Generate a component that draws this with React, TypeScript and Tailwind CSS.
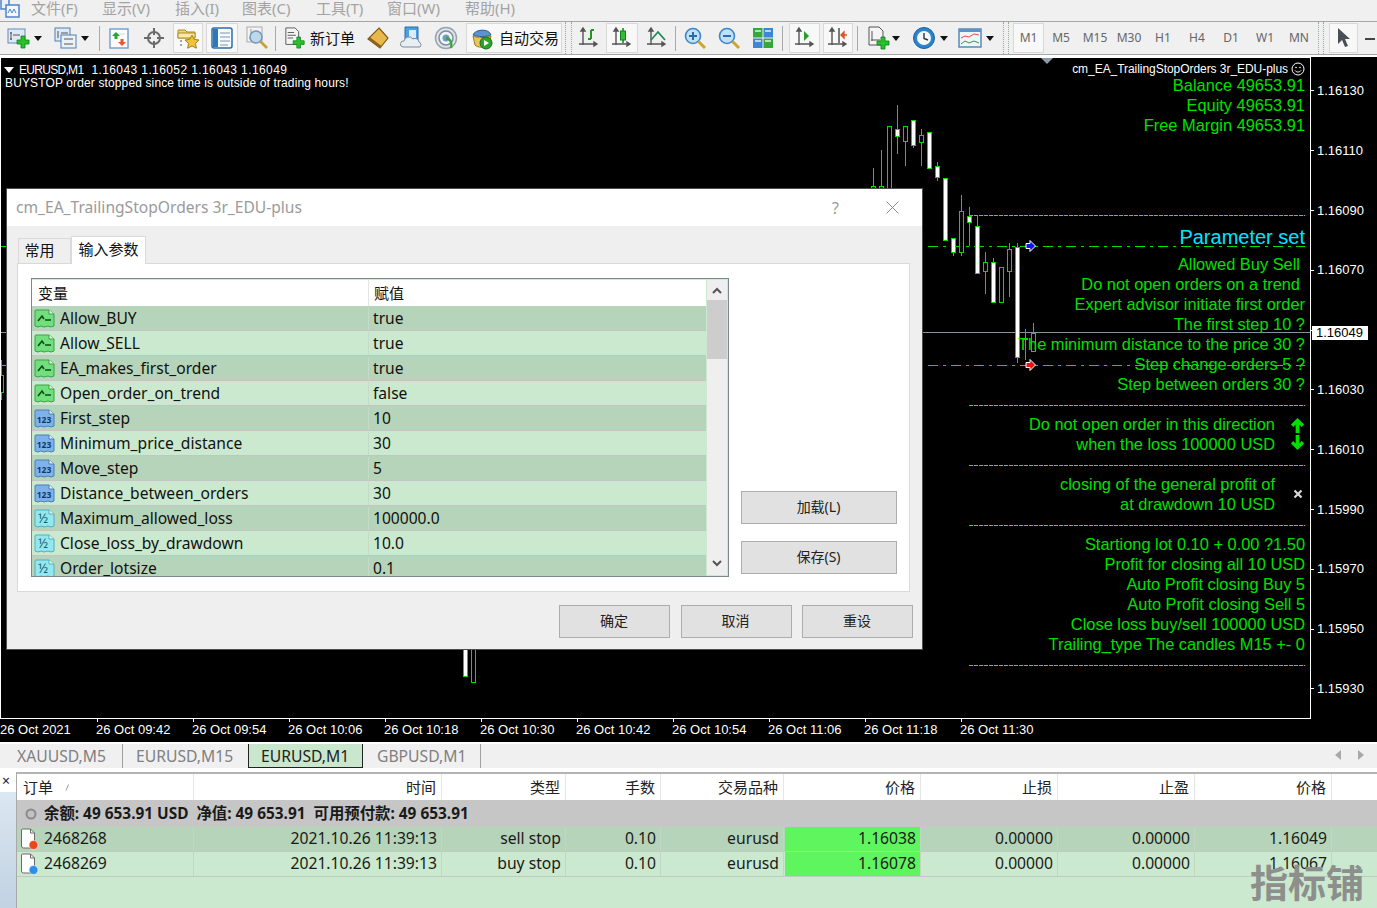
import React from "react";

const GREEN = "#00e000";
const CYAN = "#00d8e8";

// x, body top, body bottom, wick top, wick bottom, white body?
const CANDLES: [number, number, number, number, number, boolean][] = [
  [873, 186, 189, 168, 189, false],
  [881, 186, 189, 150, 189, false],
  [889, 126, 189, 126, 189, false],
  [897, 129, 136, 105, 154, true],
  [905, 126, 141, 126, 166, false],
  [913, 120, 145, 120, 148, true],
  [921, 135, 142, 129, 166, false],
  [929, 132, 168, 132, 168, true],
  [937, 166, 177, 162, 181, true],
  [945, 178, 240, 178, 240, true],
  [953, 238, 252, 238, 256, true],
  [961, 211, 252, 195, 256, false],
  [969, 216, 222, 207, 246, true],
  [977, 226, 273, 215, 273, true],
  [985, 262, 271, 252, 294, false],
  [993, 262, 302, 258, 302, true],
  [1001, 267, 302, 267, 302, false],
  [1009, 249, 271, 243, 297, false],
  [1017, 247, 357, 243, 363, true],
  [1025, 338, 339, 329, 360, false],
  [1033, 333, 351, 323, 351, false],
  [465, 640, 676, 640, 676, true],
  [473, 640, 682, 640, 682, false],
  [1, 375, 392, 360, 400, false],
];

const PRICES = ["1.16130", "1.16110", "1.16090", "1.16070", "", "1.16030", "1.16010", "1.15990", "1.15970", "1.15950", "1.15930"];
const TIMES = ["26 Oct 2021", "26 Oct 09:42", "26 Oct 09:54", "26 Oct 10:06", "26 Oct 10:18", "26 Oct 10:30", "26 Oct 10:42", "26 Oct 10:54", "26 Oct 11:06", "26 Oct 11:18", "26 Oct 11:30"];

const PARAMS: [string, string, "bool" | "int" | "dbl"][] = [
  ["Allow_BUY", "true", "bool"],
  ["Allow_SELL", "true", "bool"],
  ["EA_makes_first_order", "true", "bool"],
  ["Open_order_on_trend", "false", "bool"],
  ["First_step", "10", "int"],
  ["Minimum_price_distance", "30", "int"],
  ["Move_step", "5", "int"],
  ["Distance_between_orders", "30", "int"],
  ["Maximum_allowed_loss", "100000.0", "dbl"],
  ["Close_loss_by_drawdown", "10.0", "dbl"],
  ["Order_lotsize", "0.1", "dbl"],
];

const ORDERS = [
  ["2468268", "2021.10.26 11:39:13", "sell stop", "0.10", "eurusd", "1.16038", "0.00000", "0.00000", "1.16049"],
  ["2468269", "2021.10.26 11:39:13", "buy stop", "0.10", "eurusd", "1.16078", "0.00000", "0.00000", "1.16067"],
];

const COLS = "grid grid-cols-[177px_248px_124px_95px_123px_137px_137px_137px_137px_1fr]";

const Plus = ({ x = 0, y = 0 }: { x?: number; y?: number }) => (
  <path
    transform={`translate(${x} ${y})`}
    d="M4 0h4v4h4v4H8v4H4V8H0V4h4z"
    fill="#25c22b"
    stroke="#0f7d17"
    strokeWidth="0.8"
  />
);

const Caret = () => (
  <svg width="8" height="5" viewBox="0 0 8 5">
    <path d="M0 0h8L4 5z" fill="#111" />
  </svg>
);

const Sep = () => <div className="w-px h-[25px] bg-[#a9a9a9]" />;

const Grip = ({ className = "" }: { className?: string }) => (
  <div className={`h-[32px] border-x border-dotted border-[#9aa89a] ${className}`} />
);

const Slot = ({
  className = "",
  pressed,
  children,
}: {
  className?: string;
  pressed?: boolean;
  children?: React.ReactNode;
}) => (
  <div
    className={`flex h-[30px] shrink-0 items-center justify-center ${
      pressed ? "border border-[#d9d9d9] bg-[#f8f8f8]" : ""
    } ${className}`}
  >
    {children}
  </div>
);

const Axes = () => (
  <path d="M6 3v16M2 18h17M6 2l-2 3h4zM20 18l-3-2v4z" stroke="#555" strokeWidth="1.4" fill="#555" />
);

const Ico = ({ children, w = 24 }: { children: React.ReactNode; w?: number }) => (
  <svg width={w} height="24" viewBox="0 0 24 24">
    {children}
  </svg>
);

const Toolbar = () => (
  <div className="flex h-[34px] shrink-0 items-center border-y border-y-[#a6a6a6] bg-[#f0f0f0]">
    <div className="w-[6px] shrink-0" />
    <Slot className="w-[25px]">
      <Ico>
        <rect x="1" y="3" width="17" height="14" fill="#dfe9f4" stroke="#5f8cbc" />
        <path d="M4 6v8M3 7h2M3 13h2M6 9h7" stroke="#555" />
        <Plus x={10} y={10} />
      </Ico>
    </Slot>
    <Slot className="w-[14px]">
      <Caret />
    </Slot>
    <div className="w-[8px] shrink-0" />
    <Slot className="w-[25px]">
      <Ico>
        <rect x="1" y="2" width="15" height="13" fill="#dfe9f4" stroke="#4f80b4" />
        <rect x="7" y="9" width="15" height="13" fill="#eaf1f8" stroke="#4f80b4" />
        <path d="M4 5v7M7 7h7M10 13h9M10 18h9" stroke="#555" />
      </Ico>
    </Slot>
    <Slot className="w-[14px]">
      <Caret />
    </Slot>
    <div className="w-[7px] shrink-0" />
    <Sep />
    <Slot className="w-[38px]">
      <Ico>
        <rect x="3" y="3" width="18" height="19" fill="#fbfcfe" stroke="#79a3cc" strokeWidth="1.5" />
        <path d="M6 8h12" stroke="#cfdcea" />
        <path d="M9 6l4 4h-2.5v3h-3v-3H5z" fill="#28a828" />
        <path d="M15 20l-4-4h2.5v-3h3v3H19z" fill="#e8582c" />
      </Ico>
    </Slot>
    <Slot className="w-[32px]">
      <Ico>
        <circle cx="12" cy="12" r="6" fill="none" stroke="#6a6a6a" strokeWidth="2" />
        <path d="M12 2v7M12 15v7M2 12h7M15 12h7" stroke="#6a6a6a" strokeWidth="2" />
      </Ico>
    </Slot>
    <Slot pressed className="ml-[3px] w-[30px]">
      <Ico>
        <path d="M2 4h7l2 2h8v6H2z" fill="#f3d36e" stroke="#b08a2c" />
        <path d="M2 7h17v5H2z" fill="#fbe9a8" stroke="#b08a2c" />
        <path d="M5 14v8" stroke="#555" strokeDasharray="2 2" />
        <path d="M16 9l2.2 4.4 4.8.6-3.5 3.4.9 4.8-4.4-2.3-4.3 2.3.8-4.8L9 14l4.8-.6z" fill="#f0c43a" stroke="#a77f1c" />
      </Ico>
    </Slot>
    <Slot pressed className="ml-[3px] w-[32px]">
      <Ico>
        <rect x="2" y="2" width="20" height="20" rx="2" fill="#f6f9fd" stroke="#2d6ca8" strokeWidth="1.5" />
        <rect x="3" y="3" width="5" height="18" fill="#2f77b8" />
        <path d="M10 7h10M10 11h10M10 15h10M10 19h8" stroke="#7a98b8" />
      </Ico>
    </Slot>
    <Slot className="w-[37px]">
      <Ico>
        <rect x="2" y="1" width="15" height="15" fill="#f2f2f2" stroke="#aaa" />
        <path d="M6 3v10M4 12h11" stroke="#999" />
        <circle cx="11" cy="11" r="6" fill="#bcd7ee" stroke="#7797b5" strokeWidth="1.5" />
        <path d="M15.500 15.500L22 22" stroke="#c9a032" strokeWidth="2.6" />
      </Ico>
    </Slot>
    <Sep />
    <Slot className="ml-[8px] w-[22px]">
      <Ico>
        <path d="M2 1h10l4 4v14H2z" fill="#f4f4f4" stroke="#555" />
        <path d="M4 6h7M4 9h9M4 12h6" stroke="#555" />
        <Plus x={10} y={11} />
      </Ico>
    </Slot>
    <div className="ml-[4px] w-[46px] shrink-0 text-[15px] leading-[30px] text-[#111]">新订单</div>
    <Slot className="w-[44px]">
      <Ico>
        <path d="M13 2l9 10-8 10-12-9z" fill="#e8b94a" stroke="#7d5a18" strokeWidth="1.2" />
        <path d="M2 13l12 9 1.500-2-12-9z" fill="#8c5f1e" />
      </Ico>
    </Slot>
    <Slot className="w-[24px]">
      <Ico>
        <path d="M5 1h13v14H5z" fill="#4c9fe0" stroke="#2a6ea8" />
        <path d="M9 4h7v8H9z" fill="#d9ecfa" />
        <path d="M3 21a3 3 0 0 1 1-6 5 5 0 0 1 9-2 4 4 0 0 1 6 3 3 3 0 0 1 1 5z" fill="#e9eef3" stroke="#7a8b9c" />
      </Ico>
    </Slot>
    <Slot className="w-[42px] pl-[2px]">
      <Ico>
        <circle cx="12" cy="12" r="10.500" fill="#dfe5ea" stroke="#98a4ae" strokeWidth="1.5" />
        <circle cx="12" cy="12" r="7" fill="#f3f5f7" stroke="#7e8d9b" strokeWidth="1.5" />
        <circle cx="12" cy="12" r="3.500" fill="#6e9ec4" />
        <path d="M12 12c5 1 6 5 5 10" stroke="#3aa53a" strokeWidth="2.4" fill="none" />
      </Ico>
    </Slot>
    <Slot pressed className="w-[96px] !justify-start gap-[5px] pl-[3px]">
      <Ico>
        <path d="M3 10c4 2 14 2 18 0l-2 9c-2 3-12 3-14 0z" fill="#e9c65d" stroke="#9c7b20" />
        <path d="M3 9c2-6 16-7 18 0-4 2-14 2-18 0z" fill="#5a94c8" stroke="#2f6497" />
        <circle cx="16" cy="17" r="6" fill="#2aa52a" stroke="#16701a" />
        <path d="M14 14l5 3-5 3z" fill="#fff" />
      </Ico>
      <span className="text-[15px] leading-none text-[#111]">自动交易</span>
    </Slot>
    <Grip className="ml-[3px] w-[7px]" />
    <Slot className="w-[33px]">
      <Ico>
        <Axes />
        <path d="M14 4v9M14 4h3M14 13h-3" stroke="#1f9a1f" strokeWidth="2" fill="none" />
      </Ico>
    </Slot>
    <Slot pressed className="ml-px w-[32px]">
      <Ico>
        <Axes />
        <path d="M13 2v15" stroke="#14801a" strokeWidth="1.5" />
        <rect x="10.500" y="5" width="5" height="9" fill="#2fbf2f" stroke="#14801a" />
      </Ico>
    </Slot>
    <Slot className="w-[37px]">
      <Ico>
        <Axes />
        <path d="M6 14l7-8 7 8" stroke="#1c8a5e" strokeWidth="1.8" fill="none" />
      </Ico>
    </Slot>
    <Sep />
    <Slot className="w-[38px]">
      <Ico>
        <circle cx="10" cy="10" r="7.500" fill="#bfe0f6" stroke="#3d87c4" strokeWidth="1.6" />
        <path d="M6 10h8M10 6v8" stroke="#2a6ea8" strokeWidth="2" />
        <path d="M15.500 15.500L22 22" stroke="#d0a52e" strokeWidth="3" />
      </Ico>
    </Slot>
    <Slot className="w-[30px]">
      <Ico>
        <circle cx="10" cy="10" r="7.500" fill="#bfe0f6" stroke="#3d87c4" strokeWidth="1.6" />
        <path d="M6 10h8" stroke="#2a6ea8" strokeWidth="2" />
        <path d="M15.500 15.500L22 22" stroke="#d0a52e" strokeWidth="3" />
      </Ico>
    </Slot>
    <Slot className="w-[38px]">
      <Ico>
        <rect x="2" y="2" width="9.500" height="9.500" fill="#35a83a" />
        <rect x="12.500" y="2" width="9.500" height="9.500" fill="#3b86d6" />
        <rect x="2" y="12.500" width="9.500" height="9.500" fill="#3b86d6" />
        <rect x="12.500" y="12.500" width="9.500" height="9.500" fill="#35a83a" />
        <path d="M4 5h6M14 5h6M4 15h6M14 15h6" stroke="#e7f1e7" strokeWidth="1.4" />
      </Ico>
    </Slot>
    <Sep />
    <Slot pressed className="ml-[6px] w-[31px]">
      <Ico>
        <Axes />
        <path d="M11 5v10l5-5z" fill="#27a02b" />
      </Ico>
    </Slot>
    <Slot pressed className="ml-[3px] w-[30px]">
      <Ico>
        <Axes />
        <path d="M13 2v15" stroke="#444" strokeWidth="1.4" />
        <path d="M21 9l-6 0M15 9l3-3v6z" stroke="#d9552a" strokeWidth="1.4" fill="#d9552a" />
      </Ico>
    </Slot>
    <div className="ml-[4px]">
      <Sep />
    </div>
    <Slot className="ml-[8px] w-[24px]">
      <Ico>
        <path d="M3 1h10l4 4v14H3z" fill="#f4f4f4" stroke="#555" />
        <path d="M6 5v10M5 14h9" stroke="#555" />
        <Plus x={11} y={11} />
      </Ico>
    </Slot>
    <Slot className="w-[12px]">
      <Caret />
    </Slot>
    <Slot className="ml-[10px] w-[24px]">
      <Ico>
        <circle cx="12" cy="12" r="10.500" fill="#2a84cf" stroke="#1a5f9a" />
        <circle cx="12" cy="12" r="7" fill="#f4f8fb" />
        <path d="M12 7v5.500l4 1.500" stroke="#333" strokeWidth="1.4" fill="none" />
      </Ico>
    </Slot>
    <Slot className="ml-px w-[14px]">
      <Caret />
    </Slot>
    <Slot className="ml-[7px] w-[24px]">
      <Ico>
        <rect x="1" y="3" width="22" height="18" fill="#eef5fb" stroke="#4f80b4" strokeWidth="1.4" />
        <path d="M1 3h22v3H1z" fill="#5b93c9" />
        <path d="M3 12l4-2 4 1 5-3 5 1" stroke="#d9552a" fill="none" />
        <path d="M3 18l4-3 4 2 5-2 5 2" stroke="#2f9f3a" fill="none" />
      </Ico>
    </Slot>
    <Slot className="ml-px w-[14px]">
      <Caret />
    </Slot>
    <Grip className="ml-[6px] w-[6px]" />
    <Slot pressed className="ml-[4px] w-[31px] text-[12px] text-[#666]">
      M1
    </Slot>
    {["M5", "M15", "M30", "H1", "H4", "D1", "W1", "MN"].map((tf) => (
      <Slot key={tf} className="w-[34px] text-[12px] text-[#666]">
        {tf}
      </Slot>
    ))}
    <Grip className="ml-[2px] w-[6px]" />
    <Slot pressed className="ml-[5px] w-[29px]">
      <svg width="14" height="20" viewBox="0 0 14 20">
        <path d="M1 0v16l4-4 3 7 3-1-3-7h5z" fill="#4a4f55" />
      </svg>
    </Slot>
    <div className="ml-[7px] mt-px h-[15px] w-[10px] shrink-0 bg-[linear-gradient(#444,#444)] bg-[length:100%_2px] bg-center bg-no-repeat" />
  </div>
);

const Menu = () => (
  <div className="flex h-[21px] shrink-0 items-start overflow-hidden bg-[#f0f0f0] text-[15px] leading-[16px] text-[#a3a3a3]">
    <svg width="31" height="19" viewBox="0 0 31 19" className="shrink-0">
      <rect x="1" y="-3" width="8" height="12" fill="#e8f0fa" stroke="#4d84c9" strokeWidth="1.5" />
      <rect x="6" y="5" width="13" height="12" fill="#f4f8fd" stroke="#4d84c9" strokeWidth="1.5" />
      <path d="M8 13l2-4 2 4 2-4 2 4" stroke="#4d84c9" fill="none" />
    </svg>
    <span className="w-[71px] shrink-0">文件(F)</span>
    <span className="w-[73px] shrink-0">显示(V)</span>
    <span className="w-[67px] shrink-0">插入(I)</span>
    <span className="w-[74px] shrink-0">图表(C)</span>
    <span className="w-[71px] shrink-0">工具(T)</span>
    <span className="w-[78px] shrink-0">窗口(W)</span>
    <span className="shrink-0">帮助(H)</span>
  </div>
);

const Line = ({ children, className = "" }: { children: React.ReactNode; className?: string }) => (
  <div className={`h-5 whitespace-nowrap text-right text-[16.400px] leading-5 text-[#00e000] ${className}`}>{children}</div>
);

const ChartDrawing = () => (
  <svg className="absolute left-0 top-0 h-[685px] w-[1377px]" viewBox="0 57 1377 685">
    <path d="M0 332.500H1310" stroke="#8794a0" />
    <path d="M1 246.500H7M928 246.500H1305M1 365.500H7M928 365.500H1305" stroke={GREEN} strokeDasharray="10 5 3 5" />
    {[215.5, 405.5, 465.5, 525.5, 665.5].map((y) => (
      <path key={y} d={`M969 ${y}H1305`} stroke={CYAN} strokeDasharray="4 1" />
    ))}
    {TIMES.slice(1).map((time, i) => (
      <path key={time} d={`M${97.5 + i * 96} 718V722`} stroke="#fff" />
    ))}
    {CANDLES.map(([x, top, bottom, wickTop, wickBottom, white]) => (
      <g key={x}>
        <path d={`M${x + 0.5} ${wickTop}V${wickBottom}`} stroke={GREEN} />
        <rect
          x={x - 1.5}
          y={top + 0.5}
          width="4"
          height={bottom - top}
          fill={white ? "#fff" : "#000"}
          stroke={GREEN}
        />
      </g>
    ))}
    <path d="M1026 243.500h4v-3l5.500 5.500-5.500 5.500v-3h-4z" fill="#1414e6" stroke="#fff" />
    <path d="M1026 362.500h4v-3l5.500 5.500-5.500 5.500v-3h-4z" fill="#e61414" stroke="#fff" />
    <path d="M1041 58h12l-6 6z" fill="#8c9aa6" />
  </svg>
);

const Chart = () => (
  <div className="relative h-[685px] shrink-0 overflow-hidden bg-black font-['Liberation_Sans',sans-serif]">
    <ChartDrawing />
    <div className="relative flex h-[662px]">
      <div className="relative h-full w-[1311px] shrink-0 border border-white">
        <div className="flex h-[12px] items-center pl-[3px] pt-[12px] text-[12px] leading-none text-white">
          <svg width="10" height="6" viewBox="0 0 10 6" className="mr-[5px]">
            <path d="M0 0h10L5 6z" fill="#fff" />
          </svg>
          <span className="mr-[8px] tracking-[-0.700px]">EURUSD,M1</span>
          <span className="tracking-[0.400px]">1.16043 1.16052 1.16043 1.16049</span>
        </div>
        <div className="pl-[4px] pt-[7px] text-[12px] leading-[13px] tracking-[0.130px] text-white">
          BUYSTOP order stopped since time is outside of trading hours!
        </div>
        <div className="absolute right-[5px] top-[5px] flex flex-col">
          <div className="flex h-[12px] items-center justify-end gap-[3px] text-[12px] leading-none tracking-[-0.050px] text-white">
            <span>cm_EA_TrailingStopOrders 3r_EDU-plus</span>
            <svg width="14" height="14" viewBox="0 0 14 14">
              <circle cx="7" cy="7" r="6" fill="none" stroke="#fff" />
              <circle cx="5" cy="5.500" r="0.800" fill="#fff" />
              <circle cx="9" cy="5.500" r="0.800" fill="#fff" />
              <path d="M4 8.500c1.500 2 4.500 2 6 0" fill="none" stroke="#fff" />
            </svg>
          </div>
          <Line>Balance 49653.91</Line>
          <Line>Equity 49653.91</Line>
          <Line>Free Margin 49653.91</Line>
          <div className="mt-[92px] h-5 whitespace-nowrap text-right text-[20px] leading-5 text-[#00e5ff]">Parameter set</div>
          <div className="mt-[7px]">
            <Line className="pr-[5px]">Allowed Buy Sell</Line>
            <Line className="pr-[5px]">Do not open orders on a trend</Line>
            <Line>Expert advisor initiate first order</Line>
            <Line>The first step 10 ?</Line>
            <Line>The minimum distance to the price 30 ?</Line>
            <Line>Step change orders 5 ?</Line>
            <Line>Step between orders 30 ?</Line>
          </div>
          <div className="mt-5 flex justify-end">
            <div>
              <Line>Do not open order in this direction</Line>
              <Line>when the loss 100000 USD</Line>
            </div>
            <div className="flex w-[30px] flex-col items-end gap-[2px] pt-[4px]">
              <svg width="15" height="15" viewBox="0 0 15 16">
                <path d="M7.500 0l7 7-2.500 2.500-2.500-2.500V16h-4V7L3 9.500.5 7z" fill="#00e000" />
              </svg>
              <svg width="15" height="15" viewBox="0 0 15 16">
                <path d="M7.500 16l7-7L12 6.500 9.500 9V0h-4v9L3 6.500.5 9z" fill="#00e000" />
              </svg>
            </div>
          </div>
          <div className="mt-5 flex justify-end">
            <div>
              <Line>closing of the general profit of</Line>
              <Line>at drawdown 10 USD</Line>
            </div>
            <div className="flex w-[30px] items-center justify-end pr-[2px]">
              <svg width="10" height="10" viewBox="0 0 10 10">
                <path d="M1.500 1.500l7 7M8.500 1.500l-7 7" stroke="#d8d8d8" strokeWidth="2.2" />
              </svg>
            </div>
          </div>
          <div className="mt-5">
            <Line>Startiong lot 0.10 + 0.00 ?1.50</Line>
            <Line>Profit for closing all 10 USD</Line>
            <Line>Auto Profit closing Buy 5</Line>
            <Line>Auto Profit closing Sell 5</Line>
            <Line>Close loss buy/sell 100000 USD</Line>
            <Line>Trailing_type The candles M15 +- 0</Line>
          </div>
        </div>
      </div>
      <div className="relative flex-1 pt-[4px] text-[13px] leading-[59.800px] text-white">
        {PRICES.map((price, i) => (
          <div key={i} className="flex h-[59.800px] items-center">
            <span className="h-px w-[3px] bg-white" />
            <span className="pl-[3px]">{price}</span>
          </div>
        ))}
        <div className="absolute left-px top-[269px] h-[14px] w-[56px] bg-white pl-[4px] text-[13px] leading-[14px] text-black">1.16049</div>
      </div>
    </div>
    <div className="relative flex h-[23px] w-[1311px] text-[13px] leading-[22px] text-white">
      {TIMES.map((time) => (
        <div key={time} className="w-[96px] shrink-0 whitespace-nowrap">
          {time}
        </div>
      ))}
    </div>
  </div>
);

const ParamIcon = ({ kind }: { kind: "bool" | "int" | "dbl" }) => {
  const fill = kind === "bool" ? "#6fe07c" : kind === "int" ? "#7fb2ea" : "#93e8f0";
  const edge = kind === "bool" ? "#3f9e4b" : kind === "int" ? "#4a7fb8" : "#55aebb";
  return (
    <svg width="21" height="21" viewBox="0 0 21 21" className="shrink-0">
      <path d="M1 3a1 1 0 0 1 1-1h13l5 4v12l-3 1-3-1-4 1-3-1-3 1-3-1z" fill={fill} stroke={edge} />
      <path d="M15 2v4h5" fill="#e8f6ee" stroke={edge} />
      {kind === "bool" && <path d="M4 13l4-5 2 3M11 12h6" stroke="#0f4a1a" strokeWidth="1.6" fill="none" />}
      {kind === "int" && (
        <text x="10" y="15" textAnchor="middle" fontSize="8.500" fontWeight="700" fill="#0f3a68">
          123
        </text>
      )}
      {kind === "dbl" && (
        <text x="9" y="15" textAnchor="middle" fontSize="13" fill="#126272">
          ½
        </text>
      )}
    </svg>
  );
};

const DialogButton = ({ children, className = "" }: { children: React.ReactNode; className?: string }) => (
  <div className={`flex h-[33px] items-center justify-center border border-[#adadad] bg-[#e1e1e1] pb-[2px] pr-px text-[14px] text-[#222] ${className}`}>
    {children}
  </div>
);

const Dialog = () => (
  <div className="absolute left-[6px] top-[188px] flex h-[462px] w-[917px] flex-col border border-[#4d4d4d] bg-[#efefef]">
    <div className="flex h-[37px] shrink-0 items-center justify-between bg-white pl-[9px] pr-[23px] text-[15.600px] text-[#9a9a9a]">
      <span>cm_EA_TrailingStopOrders 3r_EDU-plus</span>
      <div className="flex items-center gap-[47px]">
        <span className="text-[16px]">?</span>
        <svg width="13" height="13" viewBox="0 0 13 13">
          <path d="M.5.500l12 12M12.500.500l-12 12" stroke="#8a8a8a" />
        </svg>
      </div>
    </div>
    <div className="ml-[11px] flex h-[37px] items-end">
      <div className="flex h-[25px] w-[53px] items-center justify-center border border-b-0 border-[#d9d9d9] pb-px pr-[10px] text-[15px] text-[#111]">常用</div>
      <div className="z-10 -mb-px flex h-[28px] w-[75px] items-center justify-center border border-b-0 border-[#d9d9d9] bg-white pb-[2px] text-[15px] text-[#111]">输入参数</div>
    </div>
    <div className="ml-[10px] flex h-[329px] w-[893px] border border-[#d9d9d9] bg-white pl-[13px] pt-[14px]">
      <div className="flex h-[299px] w-[698px] shrink-0 overflow-hidden border border-[#7c8a8c] bg-[#cbe9ce] p-px pl-0">
        <div className="w-[674px] shrink-0">
          <div className="flex h-[26px] bg-white text-[15px] leading-[26px] text-[#111]">
            <div className="w-[336px] pl-[6px]">变量</div>
            <div className="border-l border-[#e4e4e4] pl-[5px]">赋值</div>
          </div>
          {PARAMS.map(([name, value, kind], i) => (
            <div
              key={name}
              className={`flex h-[25px] items-center border-b border-[#c4c4c4] pt-px text-[15.600px] text-[#111] ${
                i % 2 === 0 ? "bg-[#b6d4b9]" : "bg-[#cbe9ce]"
              }`}
            >
              <div className="flex h-full w-[336px] items-center gap-[5px] pl-[2px]">
                <ParamIcon kind={kind} />
                {name}
              </div>
              <div className="flex h-full items-center border-l border-[#c4dcc6] pl-[4px]">{value}</div>
            </div>
          ))}
        </div>
        <div className="ml-px flex h-full flex-1 flex-col bg-[#efefef]">
          <div className="flex h-[20px] shrink-0 items-center justify-center">
            <svg width="10" height="7" viewBox="0 0 10 7">
              <path d="M1 6l4-4 4 4" stroke="#555" strokeWidth="2" fill="none" />
            </svg>
          </div>
          <div className="h-[59px] shrink-0 bg-[#cdcdcd]" />
          <div className="flex flex-1 items-end justify-center pb-[8px]">
            <svg width="10" height="7" viewBox="0 0 10 7">
              <path d="M1 1l4 4 4-4" stroke="#555" strokeWidth="2" fill="none" />
            </svg>
          </div>
        </div>
      </div>
      <div className="ml-[12px] flex w-[156px] flex-col gap-[17px] pt-[213px]">
        <DialogButton>加载(L)</DialogButton>
        <DialogButton>保存(S)</DialogButton>
      </div>
    </div>
    <div className="mr-[9px] mt-[13px] flex justify-end gap-[10.500px]">
      <DialogButton className="w-[111px]">确定</DialogButton>
      <DialogButton className="w-[111px]">取消</DialogButton>
      <DialogButton className="w-[111px]">重设</DialogButton>
    </div>
  </div>
);

const SymbolTabs = () => (
  <div className="h-[30px] shrink-0 bg-white pt-[2px]">
    <div className="flex h-[24px] bg-[#f0f0f0] text-[15.700px] text-[#808080]">
      <div className="flex h-[24px] w-[123px] items-center border-r border-[#a0a0a0] pl-[17px] pt-[2px]">XAUUSD,M5</div>
      <div className="flex h-[24px] w-[125px] items-center pl-[13px] pt-[2px]">EURUSD,M15</div>
      <div className="flex h-[24px] w-[115px] items-center border-x border-b border-[#222] bg-[#c9e7cc] pl-[12px] pt-[2px] text-[#222]">EURUSD,M1</div>
      <div className="flex h-[24px] w-[118px] items-center border-r border-[#a0a0a0] pl-[14px] pt-[2px]">GBPUSD,M1</div>
      <div className="ml-auto flex h-[22px] items-center gap-[17px] pr-[13px]">
        <svg width="6" height="10" viewBox="0 0 6 10">
          <path d="M6 0v10L0 5z" fill="#a8a8a8" />
        </svg>
        <svg width="6" height="10" viewBox="0 0 6 10">
          <path d="M0 0v10l6-5z" fill="#a8a8a8" />
        </svg>
      </div>
    </div>
  </div>
);

const OrderIcon = ({ color }: { color: string }) => (
  <svg width="19" height="22" viewBox="0 0 19 22" className="shrink-0">
    <path d="M1.500 2a1 1 0 0 1 1-1h8l4 4v15h-11a2 2 0 0 1-2-2z" fill="#fff" stroke="#6a6a6a" />
    <path d="M10.500 1v4h4" fill="none" stroke="#6a6a6a" />
    <circle cx="13.500" cy="17" r="4.500" fill={color} stroke="#fff" strokeWidth="0.6" />
  </svg>
);

const Terminal = () => (
  <div className="flex min-h-0 flex-1">
    <div className="flex w-[16px] shrink-0 flex-col">
      <div className="h-[20px] bg-white pl-[2px] pt-[2px] text-[14px] leading-[14px] text-[#222]">×</div>
      <div className="flex-1 bg-[linear-gradient(#dbe7f1,#c2d2e2)]" />
    </div>
    <div className="flex min-w-0 flex-1 flex-col border-t-[2px] border-l border-[#a9a9a9] border-t-[#b4b4b4] bg-[#cbe9ce]">
      <div className={`${COLS} h-[26px] shrink-0 bg-white text-[15px] leading-[27px] text-[#222]`}>
        <div className="flex items-center gap-[12px] border-r border-[#e6e6e6] pl-[6px]">
          订单
          <svg width="4" height="7" viewBox="0 0 4 7">
            <path d="M1 6.500L3.500 .5" stroke="#999" />
          </svg>
        </div>
        {["时间", "类型", "手数", "交易品种", "价格", "止损", "止盈", "价格"].map((h, i) => (
          <div key={i} className="border-r border-[#e6e6e6] pr-[5px] text-right">
            {h}
          </div>
        ))}
      </div>
      <div className="flex h-[27px] shrink-0 items-center gap-[7px] bg-[#c6c6c6] pl-[8px] font-bold text-[#1a1a1a]">
        <svg width="12" height="12" viewBox="0 0 12 12">
          <circle cx="6" cy="6" r="4.500" fill="#c2c2c2" stroke="#8a8a8a" strokeWidth="2" />
        </svg>
        <span className="whitespace-pre text-[15.400px]">余额: 49 653.91 USD  净值: 49 653.91  可用预付款: 49 653.91</span>
      </div>
      {ORDERS.map((row, r) => (
        <div
          key={row[0]}
          className={`${COLS} h-[25px] shrink-0 border-b border-[#c2c9c2] text-[15.700px] leading-[22px] text-[#1a1a1a] ${
            r === 0 ? "bg-[#b6d4b9]" : "bg-[#cbe9ce]"
          }`}
        >
          <div className="flex items-center gap-[5px] border-r border-[#c2d6c4] pl-[3px]">
            <OrderIcon color={r === 0 ? "#e8481c" : "#2f8fe8"} />
            <span className="-mt-[2px]">{row[0]}</span>
          </div>
          {row.slice(1).map((cell, i) => (
            <div
              key={i}
              className={`border-r border-[#c2d6c4] pr-[4px] text-right ${i === 4 ? "ml-px bg-[#5ff55f]" : ""}`}
            >
              {cell}
            </div>
          ))}
        </div>
      ))}
    </div>
  </div>
);

export default function App() {
  return (
    <div className="relative flex h-[908px] w-[1377px] flex-col overflow-hidden bg-[#f0f0f0] font-['Noto_Sans','Noto_Sans_CJK_SC',sans-serif]">
      <Menu />
      <Toolbar />
      <div className="h-[2px] shrink-0 bg-white" />
      <Chart />
      <SymbolTabs />
      <Terminal />
      <Dialog />
      <div className="absolute right-[13px] top-[860px] font-['Noto_Sans_CJK_SC',sans-serif] text-[38px] font-bold leading-[42px] text-[#8c8f8c]">
        指标铺
      </div>
    </div>
  );
}
